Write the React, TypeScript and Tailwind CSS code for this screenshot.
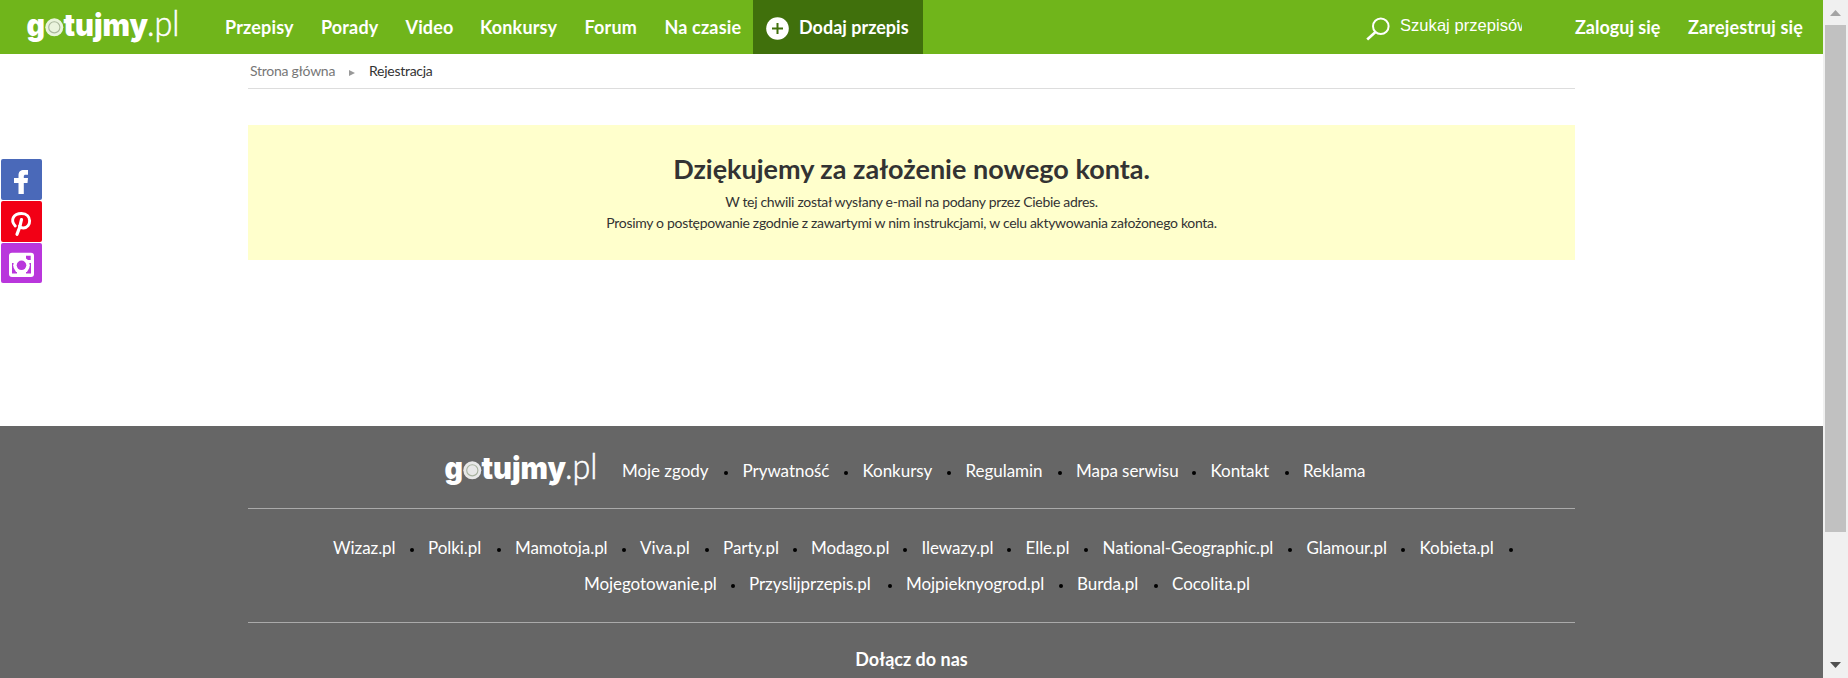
import React from "react";

function Logo({ className = "" }: { className?: string }) {
  return (
    <svg width="156" height="40" viewBox="0 0 156 40" fill="#fff" className={"shrink-0 overflow-visible " + className}>
      <g fontFamily="Inter, sans-serif" fontSize="30">
        <text x="0.5" y="29" fontWeight="900" textLength="18.5" lengthAdjust="spacingAndGlyphs">g</text>
        <circle cx="28.3" cy="20.3" r="9" opacity="0.85" />
        <circle cx="28.3" cy="20.3" r="5.6" fill="none" stroke="#7f8f70" strokeOpacity="0.6" strokeWidth="1.1" />
        <text x="37.5" y="29" fontWeight="900" textLength="84.5" lengthAdjust="spacingAndGlyphs">tujmy</text>
      </g>
      <g fontFamily="Lato, sans-serif" fontSize="35" stroke="#fff" strokeWidth="0.5">
        <text x="121" y="28.5" fontWeight="300" textLength="32.5" lengthAdjust="spacingAndGlyphs">.pl</text>
      </g>
    </svg>
  );
}

type Item = [string, string];

const nav: Item[] = [
  ["Przepisy", "w-[96px]"],
  ["Porady", "w-[84.5px]"],
  ["Video", "w-[74.5px]"],
  ["Konkursy", "w-[104.5px]"],
  ["Forum", "w-[80px]"],
  ["Na czasie", "w-[88.5px]"],
];
const info: Item[] = [
  ["Moje zgody", "w-[87.5px]"],
  ["Prywatność", "w-[87px]"],
  ["Konkursy", "w-[70px]"],
  ["Regulamin", "w-[77.5px]"],
  ["Mapa serwisu", "w-[101.5px]"],
  ["Kontakt", "w-[59.5px]"],
  ["Reklama", "w-[64px]"],
];
const sitesA: Item[] = [
  ["Wizaz.pl", "w-[62px]"],
  ["Polki.pl", "w-[54px]"],
  ["Mamotoja.pl", "w-[92px]"],
  ["Viva.pl", "w-[50px]"],
  ["Party.pl", "w-[55px]"],
  ["Modago.pl", "w-[77.5px]"],
  ["Ilewazy.pl", "w-[71px]"],
  ["Elle.pl", "w-[44px]"],
  ["National-Geographic.pl", "w-[171px]"],
  ["Glamour.pl", "w-[80px]"],
  ["Kobieta.pl", "w-[75px]"],
];
const sitesB: Item[] = [
  ["Mojegotowanie.pl", "w-[132px]"],
  ["Przyslijprzepis.pl", "w-[124px]"],
  ["Mojpieknyogrod.pl", "w-[138px]"],
  ["Burda.pl", "w-[62px]"],
  ["Cocolita.pl", "w-[80px]"],
];

function Links({ items, trailing = false }: { items: Item[]; trailing?: boolean }) {
  return (
    <>
      {items.map(([t, w], i) => (
        <React.Fragment key={t}>
          <a className={"shrink-0 whitespace-nowrap " + w}>{t}</a>
          {(trailing || i < items.length - 1) && (
            <span className="mx-[14.5px] mt-[3px] size-1 shrink-0 rounded-full bg-black" />
          )}
        </React.Fragment>
      ))}
    </>
  );
}

export default function App() {
  return (
    <div className="relative flex h-[678px] w-[1848px] overflow-hidden bg-white font-['Lato',sans-serif] text-[#333]">
      <div className="flex w-[1823px] shrink-0 flex-col">
        <header className="flex h-[54px] shrink-0 items-center bg-[#70b51b] text-[18px] font-bold text-white">
          <Logo className="ml-[26px]" />
          <nav className="ml-[43px] flex tracking-[0.15px]">
            {nav.map(([n, w]) => (
              <a key={n} className={"whitespace-nowrap " + w}>{n}</a>
            ))}
          </nav>
          <a className="flex h-full w-[170px] shrink-0 items-center bg-[#40700c] pl-[13px]">
            <svg width="23" height="23" viewBox="0 0 23 23" className="mt-[3px]">
              <circle cx="11.5" cy="11.5" r="11.3" fill="#fff" />
              <path d="M11.5 6v11M6 11.5h11" stroke="#40700c" strokeWidth="2" />
            </svg>
            <span className="ml-[10px] whitespace-nowrap">Dodaj przepis</span>
          </a>
          <div className="ml-auto flex items-center">
            <svg width="24" height="24" viewBox="0 0 24 24" fill="none" stroke="#fff" className="mt-[3px]">
              <circle cx="14.8" cy="9.3" r="7.8" strokeWidth="2" />
              <path d="M9.5 15L1.2 22.5" strokeWidth="2.6" />
            </svg>
            <span className="mb-[5px] ml-[10px] w-[122px] overflow-hidden whitespace-nowrap font-['Liberation_Sans',sans-serif] text-[16.5px] leading-[24px] font-normal tracking-[0.05px]">
              Szukaj przepisów
            </span>
            <a className="ml-[53px] w-[113px] whitespace-nowrap">Zaloguj się</a>
            <a className="w-[135px] whitespace-nowrap tracking-[0.15px]">Zarejestruj się</a>
          </div>
        </header>

        <main className="mx-[248px] flex h-[372px] shrink-0 flex-col">
          <div className="flex h-[35px] items-center border-b border-[#ddd] pb-px pl-[2px] text-[14px] tracking-[-0.27px]">
            <span className="w-[99px] text-[#777]">Strona główna</span>
            <svg width="6" height="6" viewBox="0 0 6 6" className="mt-[4px]">
              <path d="M0 0L6 3L0 6z" fill="#999" />
            </svg>
            <span className="ml-[14px] text-[#333]">Rejestracja</span>
          </div>
          <section className="mt-[36px] flex h-[135px] flex-col items-center bg-[#ffffcc] pt-[28px]">
            <h1 className="text-[27px] leading-[32px] font-bold">Dziękujemy za założenie nowego konta.</h1>
            <p className="mt-[6px] text-center text-[14px] leading-[21px] tracking-[-0.31px]">
              W tej chwili został wysłany e-mail na podany przez Ciebie adres.
              <br />
              Prosimy o postępowanie zgodnie z zawartymi w nim instrukcjami, w celu aktywowania założonego konta.
            </p>
          </section>
        </main>

        <footer className="flex h-[252px] shrink-0 flex-col bg-[#666] px-[248px] text-[17px] leading-[24px] text-white">
          <div className="flex h-[83px] shrink-0 items-center border-b border-[#aaa] pt-[6px] pl-[196px]">
            <Logo />
            <div className="mt-[2px] ml-[22px] flex items-center tracking-[-0.04px]">
              <Links items={info} />
            </div>
          </div>
          <div className="flex h-[114px] shrink-0 flex-col gap-[12px] border-b border-[#aaa] pt-[27px] tracking-[-0.06px]">
            <div className="flex items-center pl-[85px]"><Links items={sitesA} trailing /></div>
            <div className="flex items-center pl-[336px]"><Links items={sitesB} /></div>
          </div>
          <div className="pt-[24px] text-center text-[18px] font-bold">Dołącz do nas</div>
        </footer>
      </div>

      <div className="flex w-[25px] shrink-0 flex-col items-center bg-[#f0f0f0]">
        <svg width="11" height="6" viewBox="0 0 11 6" className="mt-[10px]"><path d="M5.5 0L11 6H0z" fill="#a3a3a3" /></svg>
        <div className="mt-[9px] h-[507px] w-[21px] bg-[#c1c1c1]" />
        <svg width="11" height="6" viewBox="0 0 11 6" className="mt-auto mb-[10px]"><path d="M0 0H11L5.5 6z" fill="#505050" /></svg>
      </div>

      <aside className="absolute left-px top-[159px] flex flex-col gap-px">
        <a className="flex size-[41px] items-center justify-center rounded-[2px] bg-[#4a69b9]">
          <svg width="41" height="41" viewBox="0 0 41 41"><path d="M17.5 35V24H13V19H17.5V16.5C17.5 12.7 19.5 11 23 11H27V15.8H24.7C23.3 15.8 22.8 16.3 22.8 17.4V19H27L26.5 24H22.8V35z" fill="#fff" /></svg>
        </a>
        <a className="flex size-[41px] items-center justify-center rounded-[2px] bg-[#f20015]">
          <svg width="41" height="41" viewBox="0 0 41 41" fill="none" stroke="#fff" strokeLinecap="round">
            <path d="M14.3 25C8.8 19 12.5 12.5 20.5 12.5C31.5 12.5 30.5 27 22.5 27C20.5 27 19 26 18.6 24.8" strokeWidth="2.9" />
            <path d="M20.5 18.5Q19 27 16 33.3" strokeWidth="3.2" />
          </svg>
        </a>
        <a className="flex h-[40px] w-[41px] items-center justify-center rounded-[2px] bg-[#b936dc]">
          <svg width="41" height="40" viewBox="0 0 41 40">
            <rect x="8" y="9.7" width="25" height="24.3" rx="3" fill="#fff" />
            <path d="M11 20H30V30.5H11z M25 12.7H29.7V17H25z" fill="#b936dc" />
            <circle cx="20.5" cy="22.3" r="8.3" fill="#fff" />
            <path d="M16 28H25V34H16z" fill="#fff" />
            <circle cx="20.5" cy="22.3" r="4.8" fill="#b936dc" />
          </svg>
        </a>
      </aside>
    </div>
  );
}
